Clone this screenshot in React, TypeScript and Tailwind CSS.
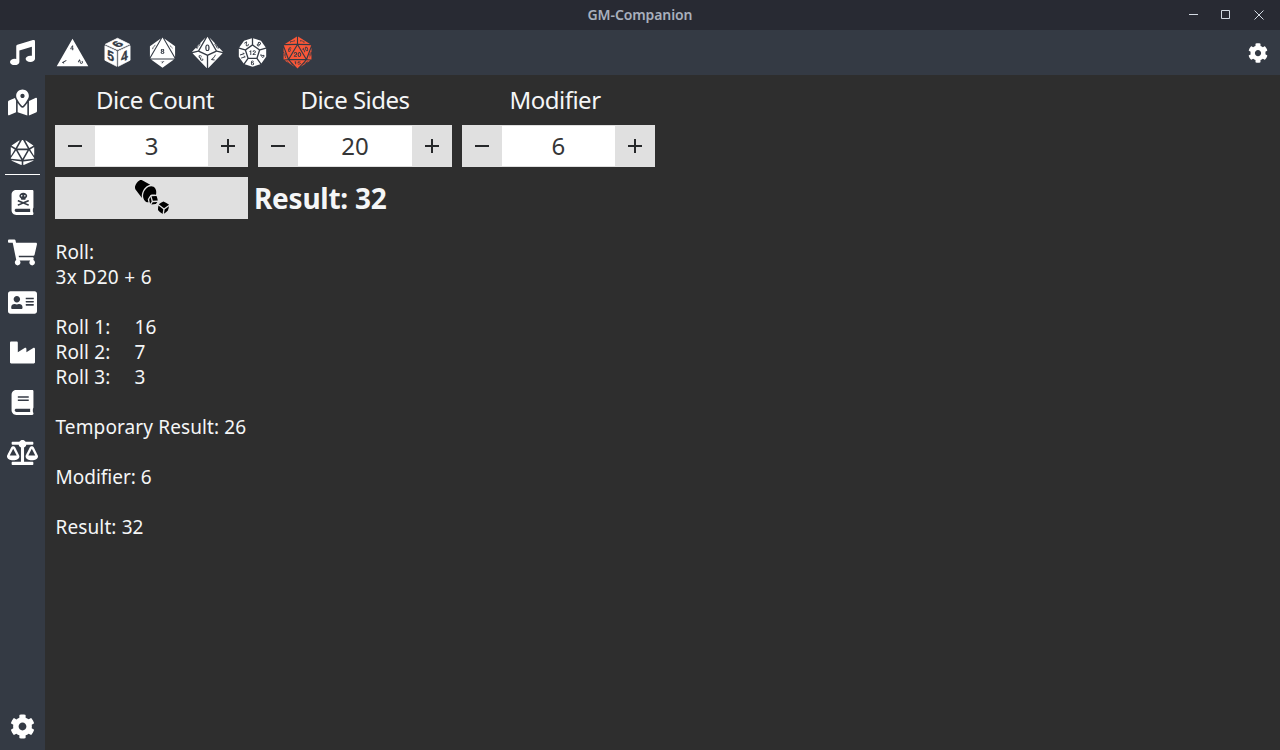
import React from "react";
import { FaMusic, FaMapMarkedAlt, FaDiceD20, FaBookDead, FaShoppingCart, FaAddressCard, FaIndustry, FaBook, FaBalanceScale, FaCog } from "react-icons/fa";
import { GiD4, GiDiceEightFacesEight, GiD10, GiD12, GiDiceTwentyFacesTwenty, GiRollingDiceCup } from "react-icons/gi";

function DiceSix() {
  return (
    <svg viewBox="0 0 30 32" width="29" height="31" fill="#fff" className="overflow-visible">
      <path d="M15 1.3 L27.6 7.5 L15 13.2 L2.4 7.5 Z M2 9 L14.2 14.6 V30.3 L2 24 Z M28 9 L15.8 14.6 V30.3 L28 24 Z" stroke="#fff" strokeWidth="0.8" strokeLinejoin="round" />
      <g fill="#343a44" stroke="#343a44" strokeWidth="0.4" fontFamily="Liberation Sans, sans-serif" fontWeight="700" fontSize="14" textAnchor="middle">
        <text transform="matrix(.9 .4 0 1 8 24.2)">5</text>
        <text transform="matrix(.9 -.4 0 1 22 24.4)">4</text>
        <text transform="matrix(.75 -.5 .85 .42 19.2 9.5)">6</text>
      </g>
    </svg>
  );
}

const navCell = "flex h-[50px] w-[45px] items-center justify-center";
const dieCell = "flex w-[45px] justify-center";

function Spin({ value }: { value: number }) {
  return (
    <div className="flex h-[42px] w-[193.3px] bg-[#e0e0e0]">
      <div className="flex w-10 items-center justify-center"><div className="h-0.5 w-3.5 bg-[#26282a]" /></div>
      <div className="my-px flex flex-1 items-center justify-center bg-white text-[24px] text-[#353637]">{value}</div>
      <div className="flex w-10 items-center justify-center">
        <svg width="14" height="14" viewBox="0 0 14 14"><path d="M0 7H14M7 0V14" stroke="#26282a" strokeWidth="2" /></svg>
      </div>
    </div>
  );
}

export default function App() {
  return (
    <div className="flex h-[750px] w-[1280px] flex-col overflow-hidden bg-[#2e2e2e] font-['Noto_Sans',sans-serif]">
      <header className="flex h-[30px] bg-[#282a33] text-[#a9b0bd]">
        <div className="w-[120px]" />
        <div className="flex flex-1 items-center justify-center pb-px text-[14px] font-semibold tracking-[-0.1px]">GM-Companion</div>
        <div className="flex w-[120px] items-center justify-end gap-[23.5px] pr-[16.5px] text-[#d3dae3]">
          <svg width="9" height="10" viewBox="0 0 9 10"><path d="M0 4.5H9" stroke="currentColor" /></svg>
          <svg width="9" height="10" viewBox="0 0 9 10"><path d="M.5.5H8.5V8.5H.5Z" fill="none" stroke="currentColor" /></svg>
          <svg width="10" height="10" viewBox="0 0 10 10"><path d="M.5.5L9.5 9.5M9.5.5L.5 9.5" stroke="currentColor" /></svg>
        </div>
      </header>
      <div className="flex flex-1">
        <nav className="flex w-[45px] flex-col bg-[#343a44] text-white">
          <div className="flex h-[45px] w-[45px] items-center justify-center"><FaMusic size={25} /></div>
          <div className="h-[2px]" />
          <div className={navCell}><FaMapMarkedAlt size={29} /></div>
          <div className={navCell}><FaDiceD20 size={25} /></div>
          <div className="-mt-[3px] mb-[2px] ml-[5px] h-px w-[35px] bg-white" />
          <div className={navCell}><FaBookDead size={25} /></div>
          <div className={navCell}><FaShoppingCart size={29} /></div>
          <div className={navCell}><FaAddressCard size={29} /></div>
          <div className={navCell}><FaIndustry size={25} /></div>
          <div className={navCell}><FaBook size={25} /></div>
          <div className={navCell}><FaBalanceScale size={31} /></div>
          <div className="flex-1" />
          <div className="flex h-[47px] items-center justify-center"><FaCog size={25} /></div>
        </nav>
        <div className="flex flex-1 flex-col">
          <div className="flex h-[45px] items-center bg-[#343a44] pl-[5px] text-white">
            <div className={dieCell}><GiD4 size={35} /></div>
            <div className={dieCell}><DiceSix /></div>
            <div className={dieCell}><GiDiceEightFacesEight size={35} /></div>
            <div className={dieCell}><GiD10 size={35} /></div>
            <div className={dieCell}><GiD12 size={35} /></div>
            <div className="flex w-[45px] justify-center text-[#f95738]"><GiDiceTwentyFacesTwenty size={35} /></div>
            <div className="flex flex-1 justify-end pr-[12px]"><FaCog size={20} /></div>
          </div>
          <main className="flex flex-col px-[10px] text-[#f5f6f7]">
            <div className="flex h-[50px] w-[600px] items-center text-center text-[24px] tracking-[-0.5px]">
              <div className="flex-1">Dice Count</div>
              <div className="flex-1">Dice Sides</div>
              <div className="flex-1">Modifier</div>
            </div>
            <div className="flex gap-[10px]">
              <Spin value={3} />
              <Spin value={20} />
              <Spin value={6} />
            </div>
            <div className="mt-[10px] flex h-[42px] items-center gap-[6px]">
              <div className="flex h-[42px] w-[193px] items-center justify-center bg-[#e0e0e0] pb-[2px] text-black"><GiRollingDiceCup size={38} /></div>
              <div className="text-[28px] font-bold tracking-[-0.25px]">Result: 32</div>
            </div>
            <div className="mt-[21px] whitespace-pre pl-[0.5px] text-[19px] leading-[25px] tracking-[0.12px]">
              <p>Roll:</p>
              <p className="tracking-[0.35px]">3x D20 + 6</p>
              <br />
              <div className="grid grid-cols-[79px_auto]">
                <span>Roll 1:</span><span>16</span>
                <span>Roll 2:</span><span>7</span>
                <span>Roll 3:</span><span>3</span>
              </div>
              <br />
              <p>Temporary Result: 26</p>
              <br />
              <p className="tracking-normal">Modifier: 6</p>
              <br />
              <p>Result: 32</p>
            </div>
          </main>
        </div>
      </div>
    </div>
  );
}
